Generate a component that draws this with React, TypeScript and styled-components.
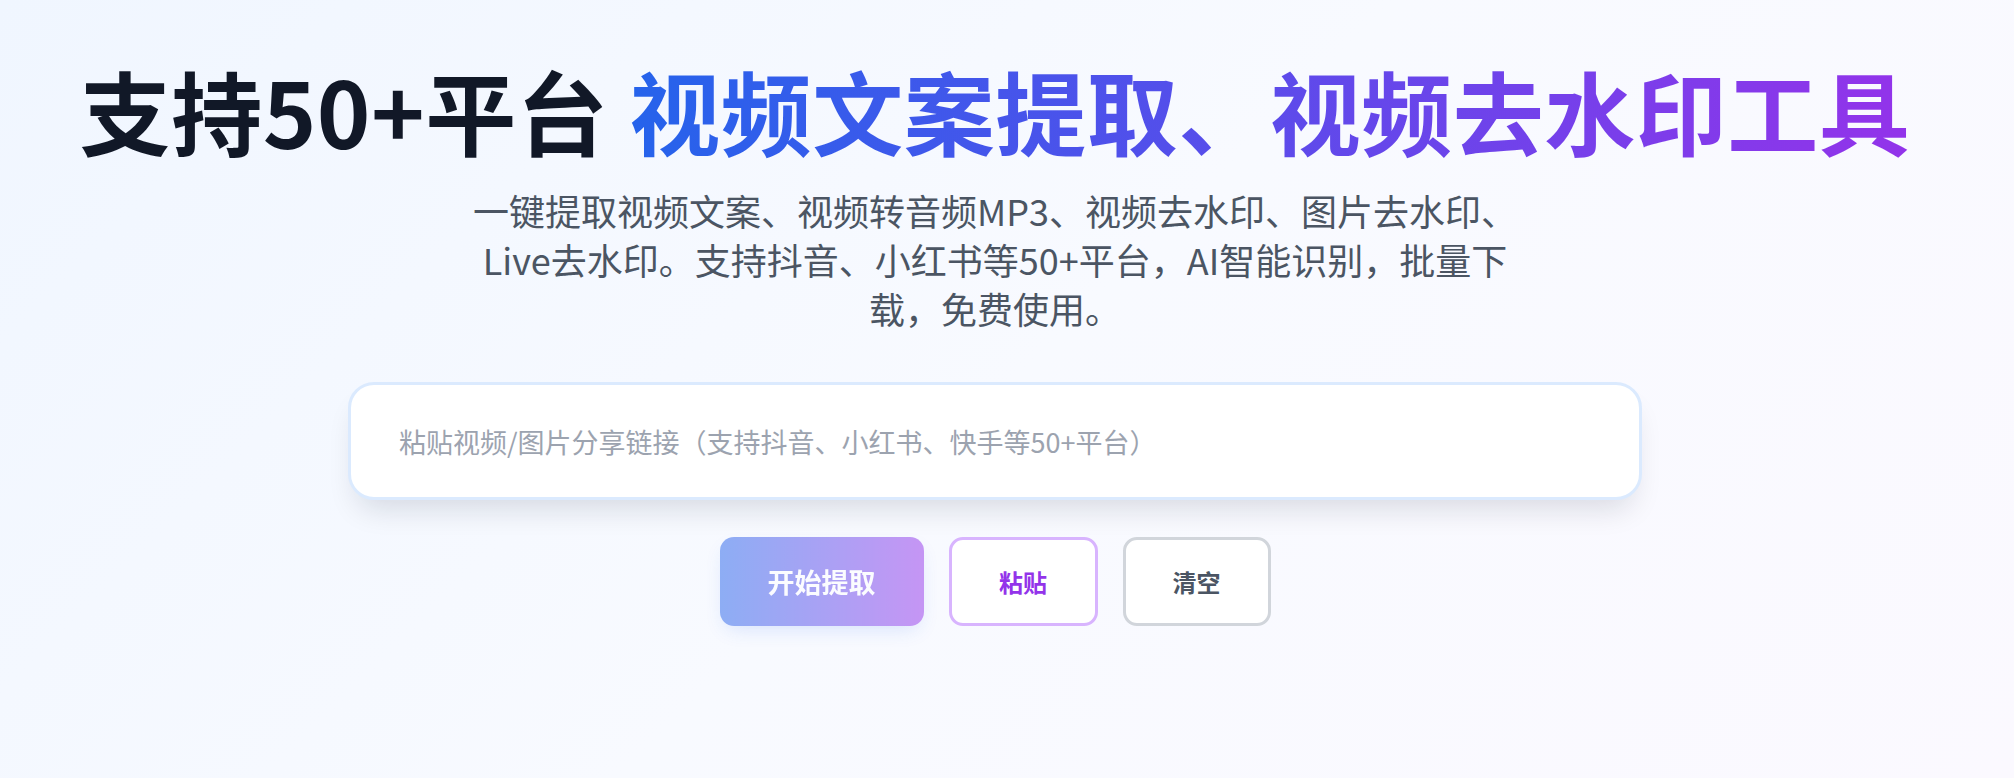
import React, { useState } from "react";
import styled, { createGlobalStyle } from "styled-components";

const GlobalStyle = createGlobalStyle`
  html, body {
    margin: 0;
    padding: 0;
  }
  body {
    font-family: "Noto Sans CJK SC", "Noto Sans", sans-serif;
    background: linear-gradient(135deg, #f0f6ff 0%, #f8faff 50%, #fbf9ff 100%);
    min-height: 100vh;
  }
`;

const Page = styled.main`
  display: flex;
  flex-direction: column;
  align-items: center;
  padding: 64px 24px 0 0;
  min-height: 100vh;
  box-sizing: border-box;
`;

const Title = styled.h1`
  margin: 0;
  font-size: 91px;
  line-height: 91px;
  font-weight: 700;
  color: #111827;
  letter-spacing: 0.5px;
  white-space: nowrap;
`;

const GradientText = styled.span`
  background: linear-gradient(90deg, #2563eb 0%, #9333ea 100%);
  -webkit-background-clip: text;
  background-clip: text;
  color: transparent;
`;

const Subtitle = styled.p`
  margin: 31px 0 0;
  max-width: 1060px;
  font-size: 36px;
  line-height: 49px;
  color: #4b5563;
  text-align: center;
`;

const InputWrap = styled.div`
  margin-top: 49px;
  width: 1294px;
`;

const LinkInput = styled.input`
  box-sizing: border-box;
  width: 100%;
  height: 118px;
  padding: 0 48px;
  border: 3px solid #dbeafe;
  border-radius: 26px;
  background: #ffffff;
  font-family: inherit;
  font-size: 27px;
  color: #111827;
  outline: none;
  box-shadow: 0 18px 30px -10px rgba(17, 24, 39, 0.14);

  &::placeholder {
    color: #9ca3af;
  }
`;

const Actions = styled.div`
  display: flex;
  gap: 25px;
  margin-top: 37px;
`;

const Button = styled.button<{ $variant: "primary" | "paste" | "clear" }>`
  box-sizing: border-box;
  height: 89px;
  border-radius: 14px;
  font-family: inherit;
  font-weight: 700;
  cursor: pointer;
  display: flex;
  align-items: center;
  justify-content: center;
  ${({ $variant }) =>
    $variant === "primary"
      ? `
    width: 204px;
    border: none;
    font-size: 27px;
    color: #ffffff;
    background: linear-gradient(90deg, #2563eb, #9333ea);
    opacity: 0.5;
    box-shadow: 0 8px 20px -6px rgba(37, 99, 235, 0.35);
  `
      : $variant === "paste"
      ? `
    width: 149px;
    border: 3px solid #d8b4fe;
    font-size: 24px;
    color: #9333ea;
    background: #ffffff;
  `
      : `
    width: 148px;
    border: 3px solid #d1d5db;
    font-size: 24px;
    color: #4b5563;
    background: #ffffff;
  `}
`;

export default function App() {
  const [url, setUrl] = useState("");
  return (
    <>
      <GlobalStyle />
      <Page>
        <Title>
          支持50+平台 <GradientText>视频文案提取、视频去水印工具</GradientText>
        </Title>
        <Subtitle>
          一键提取视频文案、视频转音频MP3、视频去水印、图片去水印、Live去水印。支持抖音、小红书等50+平台，AI智能识别，批量下载，免费使用。
        </Subtitle>
        <InputWrap>
          <LinkInput
            value={url}
            onChange={(e) => setUrl(e.target.value)}
            placeholder="粘贴视频/图片分享链接（支持抖音、小红书、快手等50+平台）"
          />
        </InputWrap>
        <Actions>
          <Button $variant="primary" disabled={!url}>
            开始提取
          </Button>
          <Button $variant="paste">粘贴</Button>
          <Button $variant="clear" onClick={() => setUrl("")}>
            清空
          </Button>
        </Actions>
      </Page>
    </>
  );
}
